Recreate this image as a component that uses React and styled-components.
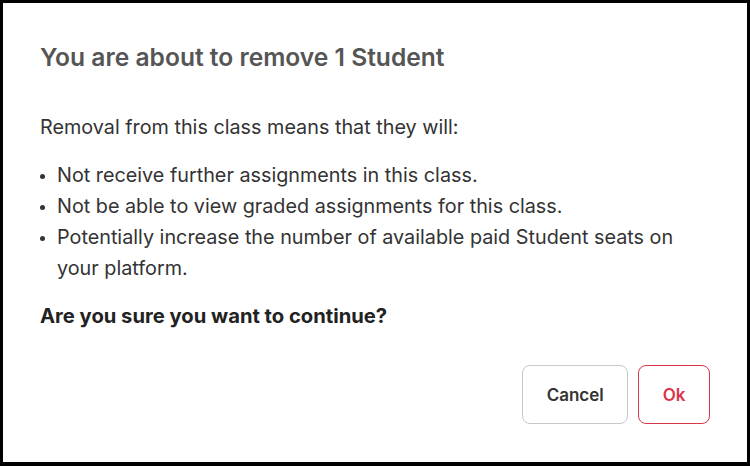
import React from "react";
import styled, { createGlobalStyle } from "styled-components";

const Global = createGlobalStyle`
  html, body { margin: 0; padding: 0; background: #fff; }
  body { font-family: Inter, "Noto Sans", sans-serif; }
`;

const Frame = styled.div`
  box-sizing: border-box;
  width: 750px;
  height: 466px;
  border: 3px solid #000;
  border-bottom-width: 4px;
  background: #fff;
  padding: 39px 37px 0 37px;
  display: flex;
  flex-direction: column;
`;

const Title = styled.h2`
  margin: 0;
  font-size: 24.6px;
  line-height: 30px;
  font-weight: 600;
  color: #555;
`;

const Text = styled.p`
  margin: ${(p) => p.$mt || 0}px 0 0 0;
  font-size: ${(p) => (p.$bold ? "20.2px" : "19.8px")};
  line-height: 31px;
  font-weight: ${(p) => (p.$bold ? 700 : 400)};
  color: ${(p) => (p.$bold ? "#222" : "#333")};
`;

const List = styled.ul`
  margin: 17px 0 0 0;
  padding-left: 17px;
  list-style: none;
  font-size: 19.8px;
  line-height: 31px;
  color: #333;
`;

const Item = styled.li`
  position: relative;
  &::before {
    content: "";
    position: absolute;
    left: -17px;
    top: 14px;
    width: 5px;
    height: 5px;
    border-radius: 50%;
    background: #333;
  }
`;

const Actions = styled.div`
  display: flex;
  justify-content: flex-end;
  gap: 10px;
  margin-top: 34px;
`;

const Button = styled.button`
  box-sizing: border-box;
  height: 59px;
  padding: 0 23.5px;
  border-radius: 8px;
  background: #fff;
  border: 1px solid ${(p) => (p.$danger ? "#d9364a" : "#c8c8c8")};
  color: ${(p) => (p.$danger ? "#d9364a" : "#333")};
  font-family: Inter, sans-serif;
  font-size: 17px;
  font-weight: 600;
  cursor: pointer;
`;

export default function App() {
  return (
    <>
      <Global />
      <Frame>
        <Title>You are about to remove 1 Student</Title>
        <Text $mt={40}>Removal from this class means that they will:</Text>
        <List>
          <Item>Not receive further assignments in this class.</Item>
          <Item>Not be able to view graded assignments for this class.</Item>
          <Item>
            Potentially increase the number of available paid Student seats on
            your platform.
          </Item>
        </List>
        <Text $bold $mt={16}>Are you sure you want to continue?</Text>
        <Actions>
          <Button>Cancel</Button>
          <Button $danger>Ok</Button>
        </Actions>
      </Frame>
    </>
  );
}
